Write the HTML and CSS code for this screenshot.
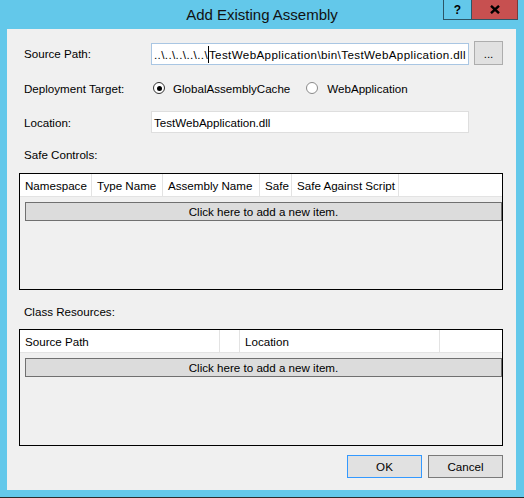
FILE: index.html
```html
<!DOCTYPE html>
<html>
<head>
<meta charset="utf-8">
<link rel="stylesheet" href="styles.css">
</head>
<body>
<div class="window">
  <div class="titlebar">
    <div class="spacer"></div>
    <div class="title">Add Existing Assembly</div>
    <div class="caption-btns">
      <span class="cap help">?</span>
      <span class="cap close"><svg width="10" height="9" viewBox="0 0 10 9"><path d="M1 0.8 L9 8.2 M9 0.8 L1 8.2" stroke="#000" stroke-width="2.4" fill="none"/></svg></span>
    </div>
  </div>
  <div class="client">
    <div class="row row-path">
      <span class="lbl">Source Path:</span>
      <div class="input focused">..\..\..\..\..\<span class="caret"></span>TestWebApplication\bin\TestWebApplication.dll</div>
      <div class="btn browse">...</div>
    </div>
    <div class="row row-target">
      <span class="lbl">Deployment Target:</span>
      <span class="radio checked"></span><span class="opt">GlobalAssemblyCache</span>
      <span class="radio"></span><span class="opt">WebApplication</span>
    </div>
    <div class="row row-loc">
      <span class="lbl">Location:</span>
      <div class="input">TestWebApplication.dll</div>
    </div>
    <div class="section-label">Safe Controls:</div>
    <div class="grid">
      <div class="grid-head head-safe">
        <div class="hcell">Namespace</div>
        <div class="hcell">Type Name</div>
        <div class="hcell">Assembly Name</div>
        <div class="hcell">Safe</div>
        <div class="hcell">Safe Against Script</div>
        <div class="hcell last"></div>
      </div>
      <div class="add-row">Click here to add a new item.</div>
    </div>
    <div class="section-label second">Class Resources:</div>
    <div class="grid">
      <div class="grid-head head-res">
        <div class="hcell">Source Path</div>
        <div class="hcell"></div>
        <div class="hcell">Location</div>
        <div class="hcell last"></div>
      </div>
      <div class="add-row">Click here to add a new item.</div>
    </div>
    <div class="actions">
      <div class="btn dlg default">OK</div>
      <div class="btn dlg cancel">Cancel</div>
    </div>
  </div>
</div>
</body>
</html>
```

FILE: styles.css
```css
html, body {
  margin: 0;
  padding: 0;
}
body {
  width: 524px;
  height: 498px;
  background: #63c8ea;
  font-family: "Liberation Sans", Arial, sans-serif;
  font-size: 11.6px;
  color: #000;
  overflow: hidden;
}
.window {
  height: 497px;
  border-bottom: 1px solid #2b2b2b;
  display: flex;
  flex-direction: column;
}
.titlebar {
  height: 29px;
  display: grid;
  grid-template-columns: 81px 1fr 81px;
}
.title {
  text-align: center;
  font-size: 15px;
  line-height: 29px;
  color: #111;
}
.caption-btns {
  display: flex;
  align-items: flex-start;
  height: 20px;
}
.cap {
  height: 19px;
  display: flex;
  align-items: center;
  justify-content: center;
  border-bottom: 1px solid #2c5566;
}
.help {
  width: 27px;
  border-left: 1px solid #2c5566;
  border-right: 1px solid #2c5566;
  font-weight: bold;
  font-size: 12px;
}
.close {
  width: 45px;
  background: #c75050;
  border-right: 1px solid #7a3a3a;
}
.client {
  margin: 0 8px 0 7px;
  height: 461px;
  background: #f0f0f0;
  padding: 12px 13px 0 12px;
  box-sizing: border-box;
  display: flex;
  flex-direction: column;
}
.row {
  display: flex;
  align-items: center;
  padding-left: 5px;
}
.lbl {
  width: 127px;
  flex: none;
}
.row-path {
  height: 24px;
}
.input {
  width: 318px;
  height: 22px;
  box-sizing: border-box;
  background: #fff;
  border: 1px solid #dedede;
  padding: 0 2px;
  display: flex;
  align-items: center;
  white-space: nowrap;
  overflow: hidden;
}
.input.focused {
  border-color: #a9c6e3;
  margin-top: 2px;
  letter-spacing: 0.38px;
}
.caret {
  display: inline-block;
  width: 1px;
  height: 17px;
  background: #000;
}
.btn {
  box-sizing: border-box;
  background: #e1e1e1;
  border: 1px solid #adadad;
  display: flex;
  align-items: center;
  justify-content: center;
}
.browse {
  width: 29px;
  height: 24px;
  margin-left: 5px;
}
.row-target {
  height: 22px;
  margin-top: 12px;
}
.radio {
  width: 12px;
  height: 12px;
  box-sizing: border-box;
  border: 1px solid #8a8a8a;
  border-radius: 50%;
  background: #fff;
  position: relative;
  flex: none;
}
.radio.checked {
  border-color: #333;
  margin-left: 2px;
}
.radio.checked::after {
  content: "";
  position: absolute;
  left: 2.5px;
  top: 2.5px;
  width: 5px;
  height: 5px;
  border-radius: 50%;
  background: #000;
}
.opt {
  margin-left: 8px;
  margin-right: 16px;
}
.row-target .opt:last-child {
  margin-left: 9px;
}
.row-loc {
  height: 22px;
  margin-top: 12px;
}
.section-label {
  padding-left: 5px;
  height: 16px;
  line-height: 16px;
  margin-top: 14px;
}
.grid {
  margin-top: 10px;
  height: 117px;
  box-sizing: border-box;
  border: 1px solid #000;
  display: flex;
  flex-direction: column;
}
.section-label.second + .grid {
  margin-top: 9px;
}
.grid-head {
  height: 23px;
  box-sizing: border-box;
  background: #fff;
  border-bottom: 1px solid #e3e3e3;
  display: grid;
}
.head-safe {
  grid-template-columns: 72px 71px 97px 32px 107px 1fr;
}
.head-res {
  grid-template-columns: 200px 20px 200px 1fr;
}
.hcell {
  border-right: 1px solid #e3e3e3;
  padding-left: 5px;
  display: flex;
  align-items: center;
  white-space: nowrap;
  overflow: hidden;
}
.hcell.last {
  border-right: none;
}
.add-row {
  margin: 5px 0 0 5px;
  height: 19px;
  box-sizing: border-box;
  background: #dcdcdc;
  border: 1px solid #707070;
  display: flex;
  align-items: center;
  justify-content: center;
}
.actions {
  margin-top: 9px;
  display: flex;
  justify-content: flex-end;
  gap: 6px;
}
.dlg {
  width: 75px;
  height: 23px;
}
.dlg.default {
  border-color: #3399ff;
}
.dlg.cancel {
  border-color: #7a7a7a;
}
```
